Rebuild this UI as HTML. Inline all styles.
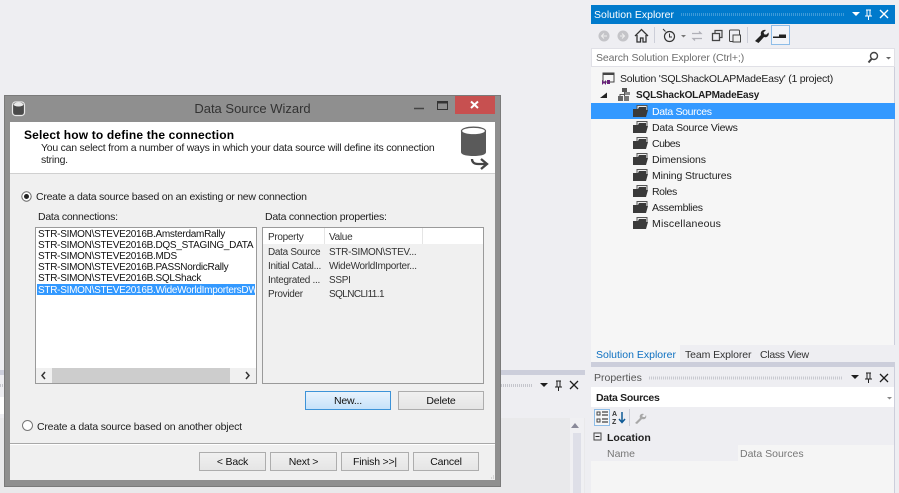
<!DOCTYPE html>
<html><head><meta charset="utf-8"><style>
html,body{margin:0;padding:0;width:899px;height:493px;overflow:hidden;background:#eeeef2}
body{position:relative;font-family:"Liberation Sans",sans-serif;font-size:10.5px;color:#1e1e1e}
.b,.t{position:absolute}
.t{white-space:nowrap;line-height:14px;height:14px}
.d{margin-top:1px;letter-spacing:-.25px}
.l{margin-top:1px;font-size:10px;letter-spacing:-.28px;color:#111}
.p{margin-top:1px;font-size:10px;letter-spacing:-.3px;color:#333}
.r{margin-top:1px;letter-spacing:-.2px}
.btn{position:absolute;box-sizing:border-box;border:1px solid #adadad;background:linear-gradient(#f0f0f0,#e5e5e5);text-align:center;font-size:10.5px;letter-spacing:-.2px;line-height:18px;color:#111}
svg{position:absolute;overflow:visible}
</style></head><body>

<!-- background left panel -->
<div class="b" style="left:0;top:370px;width:585px;height:123px;background:#eeeef2"></div>
<div class="b" style="left:0;top:370px;width:585px;height:5px;background:#cccedb"></div>
<div class="b" style="left:0;top:418px;width:585px;height:75px;background:#e9e9eb"></div>
<div class="b" style="left:0;top:397px;width:4px;height:17px;background:#fff"></div>
<div class="b" style="left:570px;top:418px;width:14px;height:75px;background:#f0f0f3"></div>
<div class="b" style="left:573px;top:433px;width:8px;height:60px;background:#dedfe8"></div>
<svg style="left:0;top:0" width="899" height="493">
<path d="M571 428l4-5 4 5z" fill="#8a8a9a"/>
<path d="M540 383h8l-4 4z" fill="#1e1e1e"/>
<path d="M556 381h5M557 381v6h3v-6M555 387h7M558.5 387v4" stroke="#1e1e1e" fill="none"/>
<path d="M570 381l8 8M578 381l-8 8" stroke="#1e1e1e" stroke-width="1.3" fill="none"/>
<line x1="501" y1="385.5" x2="533" y2="385.5" stroke="#c4c5cc" stroke-width="3" stroke-dasharray="1 1"/>
<line x1="0" y1="385.5" x2="4" y2="385.5" stroke="#c4c5cc" stroke-width="3" stroke-dasharray="1 1"/>
</svg>

<!-- Solution Explorer -->
<div class="b" style="left:591px;top:5px;width:304px;height:340px;background:#f6f6f6;box-sizing:border-box;border-right:1px solid #cccedb"></div>
<div class="b" style="left:591px;top:5px;width:304px;height:19px;background:#007acc"></div>
<div class="t" style="left:594px;top:8px;color:#fff;font-size:10.5px">Solution Explorer</div>
<div class="b" style="left:591px;top:24px;width:304px;height:24px;background:#eeeef2"></div>
<div class="b" style="left:591px;top:48px;width:304px;height:19px;background:#fff;box-sizing:border-box;border:1px solid #e0e0e6"></div>
<div class="t" style="left:596px;top:51px;color:#6d6d6d;font-size:10.5px;letter-spacing:-.1px">Search Solution Explorer (Ctrl+;)</div>
<div class="b" style="left:771px;top:25px;width:19px;height:20px;box-sizing:border-box;border:1px solid #8ebde8;background:#f2f4f8"></div>
<svg style="left:0;top:0" width="899" height="493">
<line x1="681" y1="14.5" x2="845" y2="14.5" stroke="#3d9ad8" stroke-width="3" stroke-dasharray="1 1"/>
<path d="M852 12h8l-4 4z" fill="#fff"/>
<path d="M866 10h5M867 10v6h3v-6M865 16h7M868.5 16v4" stroke="#fff" fill="none"/>
<path d="M880 10l8 8M888 10l-8 8" stroke="#fff" stroke-width="1.4" fill="none"/>
<circle cx="604" cy="36" r="5.500" fill="#c4c4c8"/><path d="M607 36h-5M604 33.500l-2.500 2.500 2.500 2.500" stroke="#eee" fill="none"/>
<circle cx="623" cy="36" r="5.500" fill="#c4c4c8"/><path d="M620 36h5M622 33.500l2.500 2.500-2.500 2.500" stroke="#eee" fill="none"/>
<path d="M635 36l6.500-6.500 6.500 6.500M637 35v7h3.500v-4h2.500v4h3v-7" stroke="#333" stroke-width="1.300" fill="none"/>
<line x1="654.500" y1="27" x2="654.500" y2="43" stroke="#ccced8"/>
<circle cx="669.500" cy="36.500" r="5" stroke="#333" fill="none" stroke-width="1.200"/><path d="M669.500 33.500v3.500h2.500M663 29l2.500 2.500" stroke="#333" fill="none"/>
<path d="M681 35h5l-2.500 2.500z" fill="#777"/>
<path d="M692 33.500h9l-2-2M702 38.500h-9l2 2" stroke="#b0b0b8" stroke-width="1.300" fill="none"/>
<rect x="712.500" y="33.500" width="7" height="7" fill="none" stroke="#444" stroke-width="1.300"/><path d="M715 33v-2.500h7v7h-2" fill="none" stroke="#444" stroke-width="1.200"/>
<rect x="729.500" y="30" width="10" height="11.500" rx="1" fill="none" stroke="#444"/><rect x="733" y="35" width="7.500" height="7" fill="#eee" stroke="#444"/>
<line x1="747.500" y1="27" x2="747.500" y2="43" stroke="#ccced8"/>
<path d="M755 41l6-6c-1-3 1-5.500 5-5l-2.500 2.500 1 2 2 0 2-2c1 3-1.500 5.500-4.500 4.500l-5.500 6z" fill="#222"/>
<path d="M773 36.500h6v-2h7v3.500h-13z" fill="#222"/>
<circle cx="874" cy="56" r="3.500" stroke="#444" fill="none" stroke-width="1.400"/><path d="M871.500 59l-3 3.500" stroke="#444" stroke-width="2"/>
<path d="M886 57h5l-2.500 2.500z" fill="#666"/>
<!-- solution icon -->
<rect x="603" y="73" width="11" height="9" fill="#f6f6f6" stroke="#444"/><rect x="603" y="73" width="11" height="2" fill="#444"/>
<path d="M602 80l2 2 2-2v5l-2-2-2 2zM607 80h3v4h-3z" fill="#68217a"/>
<path d="M600 98l7-5.500v5.500z" fill="#222"/>
<rect x="622" y="88" width="5" height="4" fill="#555"/><rect x="618" y="96" width="5" height="5" fill="#666"/><rect x="624" y="96" width="5" height="5" fill="#777"/><rect x="625" y="92" width="5" height="3" fill="#888"/>
<path d="M624.500 92v4M620 96v-1.500h5" stroke="#555" fill="none"/>
</svg>
<div class="t" style="left:620px;top:72px;font-size:10.5px;letter-spacing:-.23px">Solution 'SQLShackOLAPMadeEasy' (1 project)</div>
<div class="t" style="left:636px;top:89px;font-weight:bold;font-size:10px;letter-spacing:-.18px">SQLShackOLAPMadeEasy</div>
<div class="b" style="left:591px;top:103px;width:304px;height:16px;background:#3399ff"></div>
<div class="t r" style="left:652px;top:104px;color:#fff;letter-spacing:-.33px">Data Sources</div>
<div class="t r" style="left:652px;top:120px">Data Source Views</div>
<div class="t r" style="left:652px;top:136px;letter-spacing:-.5px">Cubes</div>
<div class="t r" style="left:652px;top:152px;letter-spacing:-.1px">Dimensions</div>
<div class="t r" style="left:652px;top:168px;letter-spacing:-.12px">Mining Structures</div>
<div class="t r" style="left:652px;top:184px;letter-spacing:-.4px">Roles</div>
<div class="t r" style="left:652px;top:200px;letter-spacing:-.3px">Assemblies</div>
<div class="t r" style="left:652px;top:216px;letter-spacing:.2px">Miscellaneous</div>
<svg style="left:0;top:0" width="899" height="493">
<g><path d="M637 105.500h10v5h-10z" fill="#eee" stroke="#555"/><path d="M633 109h5l1-2h7v3h2l-2 7h-13z" fill="#3a3a3a"/></g>
<g transform="translate(0,16)"><path d="M637 105.500h10v5h-10z" fill="#eee" stroke="#555"/><path d="M633 109h5l1-2h7v3h2l-2 7h-13z" fill="#3a3a3a"/></g>
<g transform="translate(0,32)"><path d="M637 105.500h10v5h-10z" fill="#eee" stroke="#555"/><path d="M633 109h5l1-2h7v3h2l-2 7h-13z" fill="#3a3a3a"/></g>
<g transform="translate(0,48)"><path d="M637 105.500h10v5h-10z" fill="#eee" stroke="#555"/><path d="M633 109h5l1-2h7v3h2l-2 7h-13z" fill="#3a3a3a"/></g>
<g transform="translate(0,64)"><path d="M637 105.500h10v5h-10z" fill="#eee" stroke="#555"/><path d="M633 109h5l1-2h7v3h2l-2 7h-13z" fill="#3a3a3a"/></g>
<g transform="translate(0,80)"><path d="M637 105.500h10v5h-10z" fill="#eee" stroke="#555"/><path d="M633 109h5l1-2h7v3h2l-2 7h-13z" fill="#3a3a3a"/></g>
<g transform="translate(0,96)"><path d="M637 105.500h10v5h-10z" fill="#eee" stroke="#555"/><path d="M633 109h5l1-2h7v3h2l-2 7h-13z" fill="#3a3a3a"/></g>
<g transform="translate(0,112)"><path d="M637 105.500h10v5h-10z" fill="#eee" stroke="#555"/><path d="M633 109h5l1-2h7v3h2l-2 7h-13z" fill="#3a3a3a"/></g>
</svg>

<!-- tabs -->
<div class="b" style="left:591px;top:345px;width:304px;height:17px;background:#eeeef2"></div>
<div class="b" style="left:591px;top:345px;width:89px;height:17px;background:#f6f6f6"></div>
<div class="t" style="left:596px;top:348px;color:#0e70c0">Solution Explorer</div>
<div class="t" style="left:685px;top:348px;color:#333;letter-spacing:-.1px">Team Explorer</div>
<div class="t" style="left:760px;top:348px;color:#333;letter-spacing:-.3px">Class View</div>
<div class="b" style="left:591px;top:362px;width:304px;height:5px;background:#cccedb"></div>

<!-- Properties -->
<div class="b" style="left:591px;top:367px;width:304px;height:126px;background:#f5f5f5;box-sizing:border-box;border-right:1px solid #cccedb"></div>
<div class="b" style="left:591px;top:367px;width:303px;height:20px;background:#eeeef2"></div>
<div class="t" style="left:594px;top:371px;color:#555">Properties</div>
<div class="b" style="left:591px;top:387px;width:303px;height:20px;background:#fff"></div>
<div class="t" style="left:596px;top:391px;font-weight:bold;letter-spacing:-.3px">Data Sources</div>
<div class="b" style="left:591px;top:407px;width:303px;height:54px;background:#eeeef2"></div>
<div class="b" style="left:594px;top:409px;width:16px;height:17px;box-sizing:border-box;border:1px solid #8ebde8;background:#f6f6f6"></div>
<div class="t" style="left:607px;top:431px;font-weight:bold">Location</div>
<div class="t" style="left:607px;top:447px;color:#777">Name</div>
<div class="b" style="left:738px;top:445px;width:156px;height:16px;background:#f5f5f5"></div>
<div class="t" style="left:740px;top:447px;color:#777">Data Sources</div>
<svg style="left:0;top:0" width="899" height="493">
<line x1="649" y1="378" x2="843" y2="378" stroke="#c8c9d0" stroke-width="3" stroke-dasharray="1 1"/>
<path d="M851 375h8l-4 4z" fill="#1e1e1e"/>
<path d="M866 373h5M867 373v6h3v-6M865 379h7M868.500 379v4" stroke="#1e1e1e" fill="none"/>
<path d="M880 374l8 8M888 374l-8 8" stroke="#1e1e1e" stroke-width="1.300" fill="none"/>
<path d="M887 397h5l-2.500 2.500z" fill="#888"/>
<rect x="597" y="412" width="3" height="3" fill="none" stroke="#444"/><rect x="597" y="419" width="3" height="3" fill="none" stroke="#444"/>
<path d="M602 412h6M602 415h6M602 419h6M602 422h6" stroke="#444" stroke-width="1.300"/>
<text x="612" y="416" font-family="Liberation Sans" font-size="7" font-weight="bold" fill="#333">A</text>
<text x="612" y="424" font-family="Liberation Sans" font-size="7" font-weight="bold" fill="#333">Z</text>
<path d="M622 412v10M619 419l3 3.500 3-3.500" stroke="#0e5a96" stroke-width="1.500" fill="none"/>
<line x1="629.500" y1="409" x2="629.500" y2="426" stroke="#ccced8"/>
<path d="M635 423l5-5c-1-3 1-5 4-4l-2 2 1 1 2 0 1-2c1 3-1 5-4 4l-5 5z" fill="#a8a8a8"/>
<rect x="594" y="433" width="7" height="7" fill="none" stroke="#444"/><path d="M595.500 436.500h4" stroke="#222"/>
</svg>

<!-- Dialog -->
<div class="b" style="left:4px;top:95px;width:497px;height:392px;background:#8f8f8f;box-shadow:0 0 0 1px #7a7a7a inset"></div>
<div class="t" style="left:10px;top:102px;width:485px;text-align:center;font-size:13px;color:#333">Data Source Wizard</div>
<div class="b" style="left:455px;top:96px;width:40px;height:18px;background:#c75050"></div>
<svg style="left:0;top:0" width="899" height="493">
<path d="M471 101.500l7 6.500M478 101.500l-7 6.500" stroke="#fff" stroke-width="2" fill="none"/>
<path d="M414 108.500h10" stroke="#444" stroke-width="1.500"/>
<rect x="437.500" y="101.500" width="10" height="8" fill="none" stroke="#333" stroke-width="1"/><path d="M437 102.500h11" stroke="#333" stroke-width="2"/>
<rect x="12.500" y="102" width="12" height="13.500" rx="3" fill="#4a4a4a" stroke="#e8e8e8" stroke-width="1.200"/>
<ellipse cx="18.500" cy="104.500" rx="5" ry="2" fill="#e8e8e8"/>
</svg>
<div class="b" style="left:10px;top:122px;width:485px;height:358px;background:#f0f0f0"></div>
<div class="b" style="left:10px;top:122px;width:485px;height:51px;background:#fff;border-bottom:1px solid #d0d0d0"></div>
<div class="t" style="left:24px;top:128px;font-weight:bold;font-size:12px;letter-spacing:.16px;color:#000">Select how to define the connection</div>
<div class="t d" style="left:41px;top:140px;color:#222">You can select from a number of ways in which your data source will define its connection</div>
<div class="t d" style="left:41px;top:152px;color:#222">string.</div>
<svg style="left:0;top:0" width="899" height="493">
<path d="M461 131v21c0 3 6 4 12.500 4s12.500-1 12.500-4v-21z" fill="#5a5a5a"/>
<ellipse cx="473.500" cy="131" rx="12" ry="3.800" fill="#fff" stroke="#5a5a5a" stroke-width="1.300"/>
<path d="M472 159c0 3 2 5 6 5h9M481 159l6 5-6 5" stroke="#444" stroke-width="2.300" fill="none"/>
<circle cx="26.500" cy="196.500" r="4.700" fill="#fff" stroke="#666"/><circle cx="26.500" cy="196.500" r="2.500" fill="#222"/>
<circle cx="27.500" cy="425.500" r="5" fill="#fff" stroke="#777"/>
<path d="M493 476h1M491 478h1M493 478h1" stroke="#bbb"/>
</svg>
<div class="t d" style="left:36px;top:189px">Create a data source based on an existing or new connection</div>
<div class="t d" style="left:38px;top:209px">Data connections:</div>
<div class="t d" style="left:265px;top:209px">Data connection properties:</div>

<div class="b" style="left:35px;top:227px;width:222px;height:157px;box-sizing:border-box;border:1px solid #9a9a9a;background:#fff"></div>
<div class="b" style="left:37px;top:284px;width:218px;height:11px;background:#3399ff"></div>
<div class="t l" style="left:38px;top:227px">STR-SIMON\STEVE2016B.AmsterdamRally</div>
<div class="t l" style="left:38px;top:238px">STR-SIMON\STEVE2016B.DQS_STAGING_DATA</div>
<div class="t l" style="left:38px;top:249px">STR-SIMON\STEVE2016B.MDS</div>
<div class="t l" style="left:38px;top:260px">STR-SIMON\STEVE2016B.PASSNordicRally</div>
<div class="t l" style="left:38px;top:271px">STR-SIMON\STEVE2016B.SQLShack</div>
<div class="t l" style="left:38px;top:283px;color:#fff;width:217px;overflow:hidden">STR-SIMON\STEVE2016B.WideWorldImportersDW</div>
<div class="b" style="left:36px;top:368px;width:220px;height:15px;background:#f0f0f0"></div>
<div class="b" style="left:52px;top:368px;width:178px;height:15px;background:#cdcdcd"></div>
<svg style="left:0;top:0" width="899" height="493">
<path d="M45 372l-3 3.500 3 3.500M246 372l3 3.500-3 3.500" stroke="#333" stroke-width="1.500" fill="none"/>
</svg>

<div class="b" style="left:262px;top:227px;width:222px;height:157px;box-sizing:border-box;border:1px solid #9a9a9a;background:#f0f0f0"></div>
<div class="b" style="left:263px;top:228px;width:220px;height:16px;background:#fff"></div>
<div class="b" style="left:324px;top:228px;width:1px;height:16px;background:#e5e5e5"></div>
<div class="b" style="left:422px;top:228px;width:1px;height:16px;background:#e5e5e5"></div>
<div class="t p" style="left:268px;top:230px">Property</div>
<div class="t p" style="left:329px;top:230px">Value</div>
<div class="t p" style="left:268px;top:245px">Data Source</div>
<div class="t p" style="left:329px;top:245px">STR-SIMON\STEV...</div>
<div class="t p" style="left:268px;top:259px">Initial Catal...</div>
<div class="t p" style="left:329px;top:259px">WideWorldImporter...</div>
<div class="t p" style="left:268px;top:273px">Integrated ...</div>
<div class="t p" style="left:329px;top:273px">SSPI</div>
<div class="t p" style="left:268px;top:287px">Provider</div>
<div class="t p" style="left:329px;top:287px;letter-spacing:-.6px">SQLNCLI11.1</div>

<div class="btn" style="left:305px;top:391px;width:86px;height:19px;border-color:#3d93d8;background:linear-gradient(#e8f3fc,#c6e2fa)">New...</div>
<div class="btn" style="left:398px;top:391px;width:86px;height:19px">Delete</div>
<div class="t d" style="left:37px;top:419px;letter-spacing:-.2px">Create a data source based on another object</div>
<div class="b" style="left:10px;top:443px;width:485px;height:1px;background:#a8a8a8"></div>
<div class="b" style="left:10px;top:444px;width:485px;height:1px;background:#fff"></div>
<div class="btn" style="left:199px;top:452px;width:67px;height:19px">&lt; Back</div>
<div class="btn" style="left:270px;top:452px;width:67px;height:19px">Next &gt;</div>
<div class="btn" style="left:341px;top:452px;width:68px;height:19px">Finish &gt;&gt;|</div>
<div class="btn" style="left:413px;top:452px;width:66px;height:19px">Cancel</div>
</body></html>
